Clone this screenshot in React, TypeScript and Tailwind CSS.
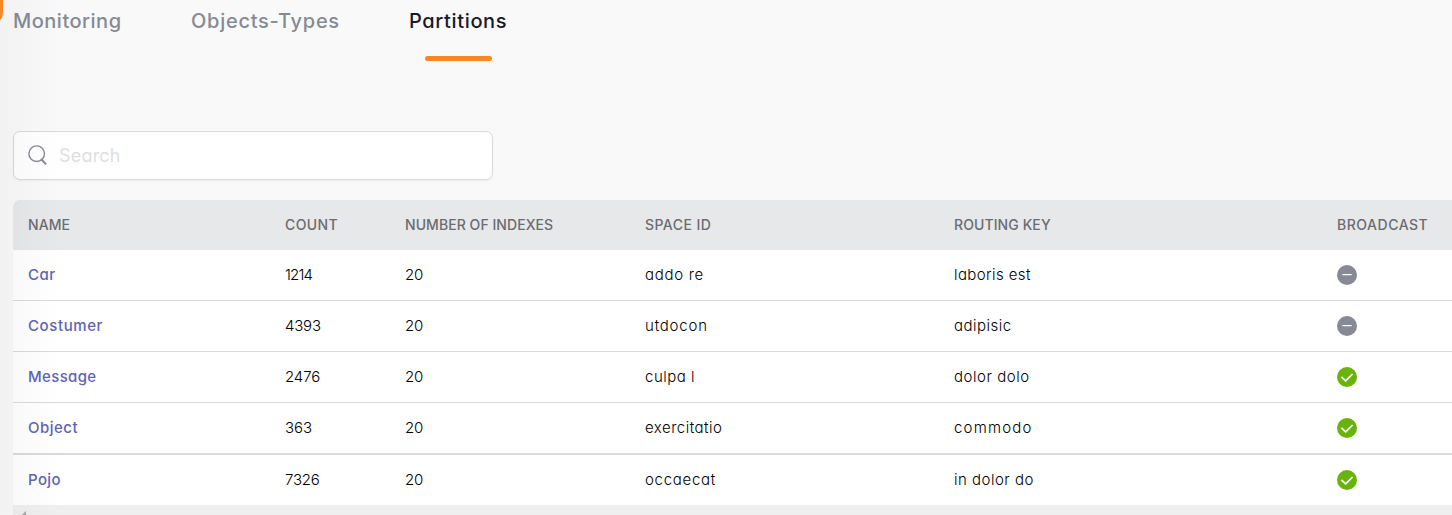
import React from "react";

type Cell = { text: string; cls: string };
type Row = { name: Cell; count: Cell; space: Cell; routing: Cell; ok: boolean; line: string };

const grid = "grid grid-cols-[257px_120px_240px_309px_383px_130px] items-center pl-[15px]";

const c = (text: string, cls = ""): Cell => ({ text, cls });

const tabs: Cell[] = [
  c("Monitoring", "w-[178px] text-[#878a94] tracking-[0.5px]"),
  c("Objects-Types", "w-[218px] text-[#878a94] tracking-[0.73px]"),
  c("Partitions", "w-[100px] text-[#171a2b] tracking-[0.65px]"),
];

const headers: Cell[] = [
  c("NAME", "tracking-[0.1px]"),
  c("COUNT", "tracking-[0.4px]"),
  c("NUMBER OF INDEXES", "tracking-[0.06px]"),
  c("SPACE ID", "tracking-[0.45px]"),
  c("ROUTING KEY", "tracking-[0.09px]"),
  c("BROADCAST", "tracking-[0.53px]"),
];

const rows: Row[] = [
  {
    name: c("Car", "tracking-[0.5px]"),
    count: c("1214", "tracking-[-0.8px]"),
    space: c("addo re", "tracking-[0.7px]"),
    routing: c("laboris est", "tracking-[0.4px]"),
    ok: false,
    line: "h-[51px] border-b",
  },
  {
    name: c("Costumer", "tracking-[0.6px]"),
    count: c("4393", "tracking-[-0.2px]"),
    space: c("utdocon", "tracking-[0.8px]"),
    routing: c("adipisic", "tracking-[0.5px]"),
    ok: false,
    line: "h-[51px] border-b",
  },
  {
    name: c("Message", "tracking-[0.35px]"),
    count: c("2476", "tracking-[-0.1px]"),
    space: c("culpa l", "tracking-[0.5px]"),
    routing: c("dolor dolo", "tracking-[0.55px]"),
    ok: true,
    line: "h-[51px] border-b",
  },
  {
    name: c("Object", "tracking-[0.5px]"),
    count: c("363", "tracking-[-0.1px]"),
    space: c("exercitatio", "tracking-[0.5px]"),
    routing: c("commodo", "tracking-[1.2px]"),
    ok: true,
    line: "h-[52px] border-b-2",
  },
  {
    name: c("Pojo", "tracking-[0.35px]"),
    count: c("7326", "tracking-[-0.2px]"),
    space: c("occaecat", "tracking-[0.7px]"),
    routing: c("in dolor do", "tracking-[0.5px]"),
    ok: true,
    line: "h-[50px]",
  },
];

function Status({ ok }: { ok: boolean }) {
  return (
    <svg width="20" height="20" viewBox="0 0 20 20" fill="none">
      <circle cx="10" cy="10" r="10" fill={ok ? "#69b30d" : "#878994"} />
      {ok ? (
        <path d="M4.4 9.8 8.7 13.9 15.6 7" stroke="#fff" strokeWidth="1.7" />
      ) : (
        <path d="M5.3 9.6H14.7" stroke="#fff" strokeWidth="1.2" />
      )}
    </svg>
  );
}

function Text({ cell }: { cell: Cell }) {
  return <span className={"whitespace-nowrap " + cell.cls}>{cell.text}</span>;
}

export default function App() {
  return (
    <div className="relative h-[515px] w-full overflow-hidden bg-[#f9f9f9] pl-[13px] font-['Inter',sans-serif] [font-feature-settings:'cv11']">
      <nav className="flex h-[131px] pt-[6px] text-[20px] leading-[30px] font-medium">
        {tabs.map((t, i) => (
          <div key={t.text} className={"shrink-0 whitespace-nowrap " + t.cls}>
            <div>{t.text}</div>
            {i === 2 && <div className="mt-5 ml-4 h-[5px] w-[67px] rounded-full bg-[#f98824]" />}
          </div>
        ))}
      </nav>
      <div className="flex h-[49px] w-[480px] items-center rounded-[7px] border border-[#d9dadc] bg-white pb-px pl-[14px] shadow-[0_1px_2px_rgba(0,0,0,0.05)]">
        <svg width="20" height="20" viewBox="0 0 20 20" fill="none" stroke="#878994">
          <circle cx="8.7" cy="8.7" r="7.8" strokeWidth="1.4" />
          <path d="M13 14 18.2 19.4" strokeWidth="2" />
        </svg>
        <span className="ml-[11px] text-[18px] tracking-[0.2px] text-[#dedfe1]">Search</span>
      </div>
      <div className="mt-5 w-[1439px] overflow-hidden rounded-tl-[7px]">
        <div className={grid + " h-[50px] bg-[#e7e8ea] pb-[2px] text-[14px] font-medium text-[#6b6c70]"}>
          {headers.map((h) => (
            <Text key={h.text} cell={h} />
          ))}
        </div>
        {rows.map((r) => (
          <div key={r.name.text} className={grid + " border-[#d9dadb] bg-white text-[15px] [font-weight:350] text-black " + r.line}>
            <div className="font-medium text-[#5f64b4]">
              <Text cell={r.name} />
            </div>
            <Text cell={r.count} />
            <Text cell={c("20", "tracking-[-0.2px]")} />
            <Text cell={r.space} />
            <Text cell={r.routing} />
            <Status ok={r.ok} />
          </div>
        ))}
        <div className="h-[10px] bg-[#efefef] pt-[6px] pl-[9px]">
          <svg width="4" height="4" viewBox="0 0 4 4">
            <path d="M4 0V4H0Z" fill="#a3a3a3" />
          </svg>
        </div>
      </div>
      <div className="pointer-events-none absolute inset-y-0 left-0 w-[61px] bg-linear-to-r from-black/3 to-transparent" />
      <div className="absolute top-0 left-0 h-[20px] w-[3px] rounded-br-[3px_9px] bg-[#f98824]" />
    </div>
  );
}
